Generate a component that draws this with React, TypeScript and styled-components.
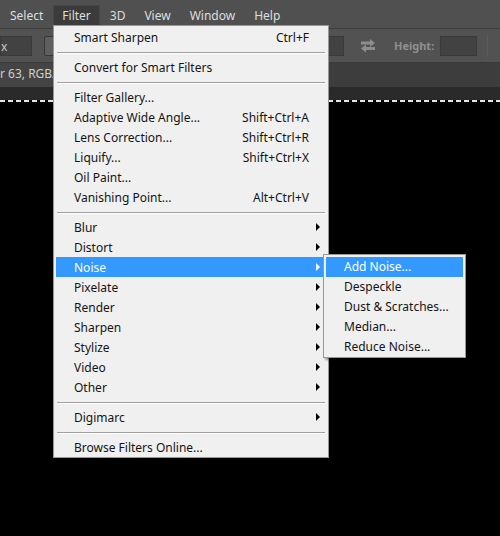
import React, {FC} from "react";
import styled, {createGlobalStyle} from "styled-components";

type Entry =
    { kind: "item", label: string, shortcut?: string, sub?: boolean, active?: boolean }
    | { kind: "sep" }

const item = (label: string, shortcut?: string): Entry => ({kind: "item", label, shortcut})
const sub = (label: string, active = false): Entry => ({kind: "item", label, sub: true, active})
const sep: Entry = {kind: "sep"}

const filterMenu: Entry[] = [
    item("Smart Sharpen", "Ctrl+F"),
    sep,
    item("Convert for Smart Filters"),
    sep,
    item("Filter Gallery..."),
    item("Adaptive Wide Angle...", "Shift+Ctrl+A"),
    item("Lens Correction...", "Shift+Ctrl+R"),
    item("Liquify...", "Shift+Ctrl+X"),
    item("Oil Paint..."),
    item("Vanishing Point...", "Alt+Ctrl+V"),
    sep,
    sub("Blur"),
    sub("Distort"),
    sub("Noise", true),
    sub("Pixelate"),
    sub("Render"),
    sub("Sharpen"),
    sub("Stylize"),
    sub("Video"),
    sub("Other"),
    sep,
    sub("Digimarc"),
    sep,
    item("Browse Filters Online..."),
]

const noiseMenu = ["Add Noise...", "Despeckle", "Dust & Scratches...", "Median...", "Reduce Noise..."]

const menuTitles = ["Select", "Filter", "3D", "View", "Window", "Help"]

const GlobalStyle = createGlobalStyle`
  html, body {
    margin: 0;
    padding: 0;
    background: #000;
  }
`

const SwapIcon: FC = () => (
    <svg width="16" height="15" viewBox="0 0 16 15" fill="#8c8c8c">
        <path d="M1 3.5h9V1l5 4-5 4V6.5H1z"/>
        <path d="M15 8.5H6V6L1 10l5 4v-2.5h9z" transform="translate(0 0.5)"/>
    </svg>
)

export default function App() {
    return <Frame>
        <GlobalStyle/>
        <MenuBar>
            {menuTitles.map(t => <MenuTitle key={t} open={t === "Filter"}>{t}</MenuTitle>)}
        </MenuBar>
        <OptionsBar>
            <Field width={32}>x</Field>
            <Button width={70} style={{marginLeft: 12}}/>
            <Field width={60} style={{marginLeft: 170}}/>
            <IconSlot><SwapIcon/></IconSlot>
            <OptLabel>Height:</OptLabel>
            <Field width={37}/>
            <VDivider/>
            <Button width={40} style={{marginLeft: 12}}/>
        </OptionsBar>
        <TabBar>
            <DocTab>r 63, RGB/8) ×</DocTab>
        </TabBar>
        <RulerStrip/>
        <Marquee/>
        <Canvas/>

        <Dropdown>
            {filterMenu.map((e, i) => e.kind === "sep"
                ? <Separator key={i}/>
                : <MenuItem key={i} active={!!e.active}>
                    <ItemLabel>{e.label}</ItemLabel>
                    <Shortcut>{e.shortcut}</Shortcut>
                    <ArrowCell>{e.sub && <Arrow active={!!e.active}/>}</ArrowCell>
                    {e.active && <SubMenu>
                        {noiseMenu.map((n, j) => <SubItem key={n} active={j === 0}>{n}</SubItem>)}
                    </SubMenu>}
                </MenuItem>)}
        </Dropdown>
    </Frame>
}

const Frame = styled.div`
  position: relative;
  width: 500px;
  height: 536px;
  overflow: hidden;
  display: flex;
  flex-direction: column;
  background: #000;
  font-family: "Noto Sans", "Open Sans", sans-serif;
  font-size: 12px;
`

const MenuBar = styled.div`
  height: 28px;
  box-sizing: border-box;
  padding: 5px 0 3px 1px;
  display: flex;
  gap: 1px;
  background: #505050;
`

const MenuTitle = styled.div<{ open: boolean }>`
  height: 20px;
  line-height: 19px;
  padding: 0 8px;
  color: #dedede;
  box-sizing: border-box;
  border: 1px solid ${p => p.open ? "#464646" : "transparent"};
  border-bottom: none;
  background: ${p => p.open ? "#3b3b3b" : "transparent"};
`

const OptionsBar = styled.div`
  height: 35px;
  box-sizing: border-box;
  display: flex;
  align-items: center;
  background: #525252;
  border-top: 1px solid #3c3c3c;
  border-bottom: 1px solid #3a3a3a;
  white-space: nowrap;
`

const Field = styled.div<{ width: number }>`
  width: ${p => p.width}px;
  height: 20px;
  flex: none;
  box-sizing: border-box;
  padding-left: 0;
  line-height: 19px;
  background: #424242;
  border: 1px solid #3a3a3a;
  color: #c8c8c8;
  font-size: 12px;
`

const Button = styled.div<{ width: number }>`
  width: ${p => p.width}px;
  height: 20px;
  flex: none;
  box-sizing: border-box;
  border-radius: 2px;
  background: #5e5e5e;
  border: 1px solid #363636;
`

const IconSlot = styled.div`
  width: 16px;
  display: flex;
  margin: 0 0 0 16px;
`

const OptLabel = styled.div`
  margin: 0 6px 0 18px;
  color: #8f8f8f;
  font-size: 11px;
  font-weight: bold;
`

const VDivider = styled.div`
  width: 1px;
  height: 22px;
  margin-left: 10px;
  background: #3a3a3a;
  border-right: 1px solid #5c5c5c;
`

const TabBar = styled.div`
  height: 24px;
  display: flex;
  background: #3d3d3d;
`

const DocTab = styled.div`
  line-height: 22px;
  color: #cfcfcf;
  white-space: nowrap;
  background: #444;
  padding-right: 8px;
`

const RulerStrip = styled.div`
  height: 13px;
  background: #2a2a2a;
`

const Marquee = styled.div`
  height: 2px;
  background: repeating-linear-gradient(90deg, #e4e4e4 0 5px, transparent 5px 8px);
`

const Canvas = styled.div`
  flex: 1;
  background: #000;
`

const Dropdown = styled.div`
  position: absolute;
  left: 53px;
  top: 25px;
  width: 276px;
  box-sizing: border-box;
  padding: 1px 2px 0;
  background: #f0f0f0;
  border: 1px solid #979797;
  color: #141414;
`

const MenuItem = styled.div<{ active: boolean }>`
  position: relative;
  height: 20px;
  display: flex;
  align-items: center;
  padding-left: 18px;
  background: ${p => p.active ? "#3399ff" : "transparent"};
  color: ${p => p.active ? "#fff" : "inherit"};
`

const ItemLabel = styled.span`
  flex: 1;
  white-space: nowrap;
`

const Shortcut = styled.span`
  white-space: nowrap;
`

const ArrowCell = styled.span`
  width: 17px;
  display: flex;
  justify-content: center;
`

const Arrow = styled.span<{ active: boolean }>`
  width: 0;
  height: 0;
  border-left: 4px solid ${p => p.active ? "#fff" : "#000"};
  border-top: 4px solid transparent;
  border-bottom: 4px solid transparent;
`

const Separator = styled.div`
  height: 10px;
  margin: 0 1px;
  display: flex;
  align-items: center;
  &::before {
    content: "";
    flex: 1;
    height: 1px;
    background: #a0a0a0;
    box-shadow: 0 1px 0 #fff;
  }
`

const SubMenu = styled.div`
  position: absolute;
  left: calc(100% - 3px);
  top: -3px;
  width: 143px;
  box-sizing: border-box;
  padding: 2px 2px 0;
  background: #f0f0f0;
  border: 1px solid #979797;
  box-shadow: 2px 2px 2px rgba(0, 0, 0, 0.35);
  color: #141414;
`

const SubItem = styled.div<{ active: boolean }>`
  height: 20px;
  line-height: 20px;
  padding-left: 18px;
  white-space: nowrap;
  background: ${p => p.active ? "#3399ff" : "transparent"};
  color: ${p => p.active ? "#fff" : "inherit"};
`
